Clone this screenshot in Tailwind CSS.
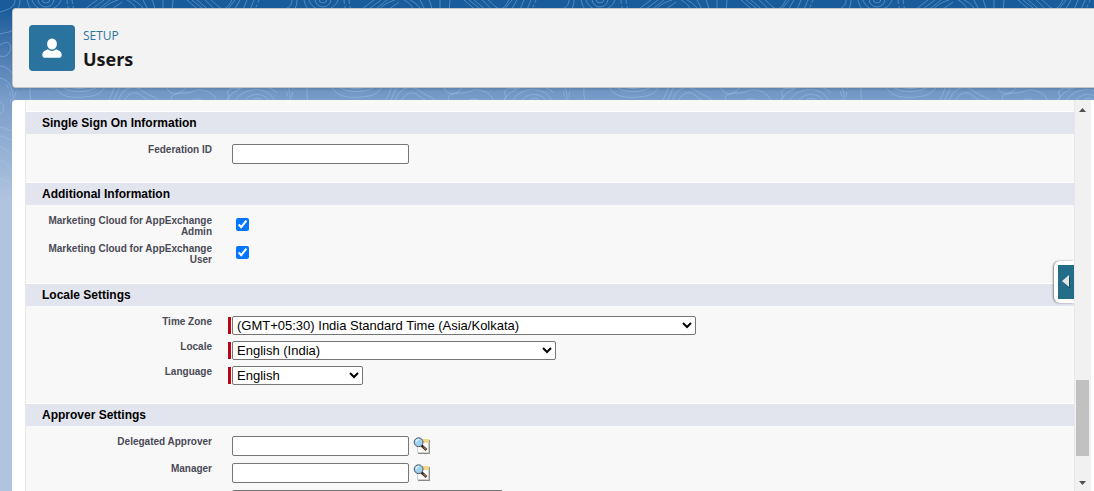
<!DOCTYPE html>
<html lang="en">
<head>
<meta charset="utf-8">
<meta name="viewport" content="width=device-width, initial-scale=1">
<title>Users | Setup</title>
<script src="https://cdn.jsdelivr.net/npm/@tailwindcss/browser@4"></script>
</head>
<body class="relative h-screen overflow-hidden bg-[#b0c4df] font-['Liberation_Sans',Arial,sans-serif]">

<!-- Backdrop: blue gradient with repeating contour lines -->
<div class="absolute inset-x-0 top-0 -z-10 h-[200px] bg-linear-to-b from-[#195c9b] from-5% via-[#7a9dc9] via-50% to-[#b0c4df]">
  <svg class="h-full w-full" aria-hidden="true">
    <defs>
      <pattern id="contours" width="277" height="200" patternUnits="userSpaceOnUse">
        <g fill="none" stroke="#a9cdf0" stroke-opacity=".38" stroke-width="1">
          <circle cx="46" cy="-1" r="4"/><circle cx="46" cy="-1" r="8"/>
          <path d="M32 0c2 6 7 10 14 10s13-4 15-10M27 0c1 5 3 8 6 12M15 0c0 6-4 9-15 12M20 0c0 4-1 8-4 12"/>
          <path d="M67 0c0 4 2 8 1 12M72 0l2 12" stroke-dasharray="4 2"/>
          <path d="M81 12L97 0M88 12l16-12M95 12L110 0M100 12c6-8 12-10 18-12M108 12l14-10"/>
          <path d="M127 0c6 3 9 7 10 12M133 0c6 3 10 7 12 12M143 0l6 12M152 0c2 4 3 8 3 12M163 0v12M173 0l-1 12"/>
          <path d="M187 0l14 12M192 0l15 12M197 0l14 12M205 0c7 5 13 18 22 10l8-10M211 0c7 5 11 14 18 5l3-5M240 0l-7 12M247 0l-5 12M254 0l-5 12"/>
          <path d="M259 0l-5 12" stroke-dasharray="3 2"/>
          <path d="M60 84c4 10 34 10 40 0M66 84c4 6 22 6 27 0M54 84c4 14 20 15 38 12 10-2 12-8 15-12"/>
          <path d="M108 102c4-8 6-12 7-18M113 102l8-18M118 102c4-16 18-18 26-10 8 5 12 5 16 10M124 102c4-10 12-12 19-5l8 5"/>
          <path d="M167 88c4 9 14 6 18 0M173 102c-6-7 4-9 12-9 8 0 10-4 16-3 9 1 14 5 16 12M190 102c4-4 10-4 14 0"/>
          <path d="M240 89c-8-2-14 0-12 5 2 4 0 4-1 8M226 102c8-20 50-24 56 0M235 102c6-15 34-18 40 0M244 102c4-9 20-11 26 0M251 102c3-5 10-5 12 0"/>
          <path d="M6 84c5 8 4 12 5 18M17 84l-3 18" stroke-dasharray="5 3"/>
          <path d="M31 84c-2 6-1 12 0 18M0 45c8-6 14 0 9 8-3 4-6 4-9 3M0 78c10 2 14 12 13 24M0 102c7 2 3 12 0 12"/>
          <path d="M0 34c6-2 10-1 14-5M0 66c6 0 9 4 13 8M0 127c5 0 8 4 12 4M0 136c5 0 8 4 12 4M0 147c4 0 8 5 12 8M0 160c4 0 8 6 12 10M0 178c5 2 8 4 12 3"/>
        </g>
      </pattern>
    </defs>
    <rect width="100%" height="100%" fill="url(#contours)"/>
  </svg>
</div>

<div class="flex h-full flex-col gap-3 pt-2 pl-3">

  <header class="flex h-20 shrink-0 gap-2 rounded-l border border-r-0 border-[#c9c7c5] bg-[#f3f3f3] pt-4 pl-4 font-['Open_Sans','Noto_Sans',sans-serif] shadow-[0_2px_2px_rgba(0,0,0,0.1)]">
    <span class="flex size-[46px] shrink-0 items-center justify-center rounded bg-[#2a739e]">
      <svg class="size-[22px]" viewBox="0 0 22 22" fill="#fff" aria-hidden="true">
        <ellipse cx="11" cy="7" rx="4.900" ry="5.600"/>
        <path d="M7 12.200c1.200 1.100 2.600 1.700 4 1.700s2.800-.6 4-1.700c3 1 5.700 2.700 5.700 5.600 0 1.900-.8 2.900-2.300 2.900H3.600c-1.500 0-2.300-1-2.300-2.900 0-2.900 2.700-4.600 5.700-5.600z"/>
      </svg>
    </span>
    <h1 class="flex flex-col pt-0.5">
      <span class="text-xs leading-[18px] text-[#2a739e]">SETUP</span>
      <span class="text-lg leading-7 font-bold text-[#181818]">Users</span>
    </h1>
  </header>

  <main class="flex min-h-0 grow rounded-tl bg-white pr-[3px] pl-[13px]">
    <form class="relative min-w-0 grow overflow-hidden border-l border-[#e8e8ea] bg-[#f8f8f8] pt-[11px]">

      <section>
        <h2 class="border-t border-white bg-[#e3e5ee] pl-4 text-xs leading-[22px] font-bold text-black">Single Sign On Information</h2>
        <div class="grid gap-[6px] pt-[10px] pb-[18px]">
          <div class="flex gap-5">
            <label for="federation" class="w-[186px] text-right text-[10px] leading-[11px] font-bold text-[#4a4a56]">Federation ID</label>
            <input id="federation" type="text" class="h-5 w-[177px] rounded-xs border border-[#767676] bg-white px-1 text-[13px]">
          </div>
        </div>
      </section>

      <section>
        <h2 class="border-t border-white bg-[#e3e5ee] pl-4 text-xs leading-[22px] font-bold text-black">Additional Information</h2>
        <div class="grid gap-[6px] pt-[10px] pb-[18px]">
          <div class="flex gap-6">
            <label for="mc-admin" class="w-[186px] pl-3 text-right text-[10px] leading-[11px] font-bold text-[#4a4a56]">Marketing Cloud for AppExchange Admin</label>
            <input id="mc-admin" type="checkbox" checked class="mt-[3px] size-[13px]">
          </div>
          <div class="flex gap-6">
            <label for="mc-user" class="w-[186px] pl-3 text-right text-[10px] leading-[11px] font-bold text-[#4a4a56]">Marketing Cloud for AppExchange User</label>
            <input id="mc-user" type="checkbox" checked class="mt-[3px] size-[13px]">
          </div>
        </div>
      </section>

      <section>
        <h2 class="border-t border-white bg-[#e3e5ee] pl-4 text-xs leading-[22px] font-bold text-black">Locale Settings</h2>
        <div class="grid gap-[6px] pt-[10px] pb-[18px]">
          <div class="flex">
            <label for="tz" class="mr-4 w-[186px] text-right text-[10px] leading-[11px] font-bold text-[#4a4a56]">Time Zone</label>
            <span class="mt-px mr-px h-[17px] w-[3px] bg-[#ba0517]"></span>
            <select id="tz" class="h-[19px] w-[464px] rounded-xs border border-[#767676] bg-white text-[13px] text-black"><option>(GMT+05:30) India Standard Time (Asia/Kolkata)</option></select>
          </div>
          <div class="flex">
            <label for="locale" class="mr-4 w-[186px] text-right text-[10px] leading-[11px] font-bold text-[#4a4a56]">Locale</label>
            <span class="mt-px mr-px h-[17px] w-[3px] bg-[#ba0517]"></span>
            <select id="locale" class="h-[19px] w-[324px] rounded-xs border border-[#767676] bg-white text-[13px] text-black"><option>English (India)</option></select>
          </div>
          <div class="flex">
            <label for="language" class="mr-4 w-[186px] text-right text-[10px] leading-[11px] font-bold text-[#4a4a56]">Language</label>
            <span class="mt-px mr-px h-[17px] w-[3px] bg-[#ba0517]"></span>
            <select id="language" class="h-[19px] w-[131px] rounded-xs border border-[#767676] bg-white text-[13px] text-black"><option>English</option></select>
          </div>
        </div>
      </section>

      <section>
        <h2 class="border-t border-white bg-[#e3e5ee] pl-4 text-xs leading-[22px] font-bold text-black">Approver Settings</h2>
        <div class="grid gap-[7px] pt-[10px] pb-[18px]">
          <div class="flex">
            <label for="approver" class="mr-5 w-[186px] text-right text-[10px] leading-[11px] font-bold text-[#4a4a56]">Delegated Approver</label>
            <input id="approver" type="text" class="mr-1 h-5 w-[177px] rounded-xs border border-[#767676] bg-white px-1 text-[13px]">
            <button type="button" aria-label="Delegated Approver Lookup" class="size-5">
              <svg class="size-5" viewBox="0 0 20 20" aria-hidden="true">
                <g id="lookup">
                  <path d="M5 17.300h11.300V4" fill="none" stroke="#8a8a86" stroke-width="1.200"/>
                  <path d="M4.500 3.500h11v13h-11z" fill="#fdfdfb" stroke="#b9b9b4" stroke-width=".6"/>
                  <path d="M9 3h6.500v4H9z" fill="#f5d588"/>
                  <path d="M8.500 9.500l5 4.500" stroke="#3a2a22" stroke-width="2.600"/>
                  <path d="M10.500 11.200l2.500 2.200" stroke="#d9a06a" stroke-width="1"/>
                  <circle cx="5.600" cy="6.200" r="4.400" fill="#9fd2ee" stroke="#4a5664" stroke-width="1"/>
                  <path d="M3.300 6c.2-1.500 1.200-2.500 2.700-2.600" fill="none" stroke="#e6f6ff" stroke-width="1.200"/>
                </g>
              </svg>
            </button>
          </div>
          <div class="flex">
            <label for="manager" class="mr-5 w-[186px] text-right text-[10px] leading-[11px] font-bold text-[#4a4a56]">Manager</label>
            <input id="manager" type="text" class="mr-1 h-5 w-[177px] rounded-xs border border-[#767676] bg-white px-1 text-[13px]">
            <button type="button" aria-label="Manager Lookup" class="size-5">
              <svg class="size-5" viewBox="0 0 20 20" aria-hidden="true"><use href="#lookup"/></svg>
            </button>
          </div>
          <div class="flex pl-[206px]">
            <select aria-label="Approval request emails" class="h-[19px] w-[271px] rounded-xs border border-[#767676] bg-white text-[13px]"><option></option></select>
          </div>
        </div>
      </section>

      <!-- Side panel handle -->
      <button type="button" aria-label="Open sidebar" class="absolute top-[161px] right-0 flex h-[42px] items-center rounded-l-md bg-white pl-1 shadow-[-1px_0_2px_rgba(0,0,0,0.45)]">
        <span class="flex h-[34px] w-4 items-center justify-center bg-[#236d88]">
          <svg class="h-[14px] w-2" viewBox="0 0 8 14" aria-hidden="true"><path d="M8 2v12L2 8z" fill="#144a5e"/><path d="M7 0v12L0 6z" fill="#e4e4e4"/></svg>
        </span>
      </button>
    </form>

    <!-- Scroll track -->
    <div class="flex w-[17px] shrink-0 flex-col items-center justify-between bg-[#f1f1f1] pt-2 pb-[6px] shadow-[inset_1px_0_0_#e8e8ea]" aria-hidden="true">
      <svg class="h-1 w-[7px]" viewBox="0 0 7 4"><path d="M3.500 0L7 4H0z" fill="#505050"/></svg>
      <div class="flex grow flex-col justify-end pb-[25px]">
        <div class="h-[76px] w-[13px] bg-[#c1c1c1]"></div>
      </div>
      <svg class="h-1 w-[7px]" viewBox="0 0 7 4"><path d="M0 0h7L3.500 4z" fill="#505050"/></svg>
    </div>
  </main>
</div>
</body>
</html>
